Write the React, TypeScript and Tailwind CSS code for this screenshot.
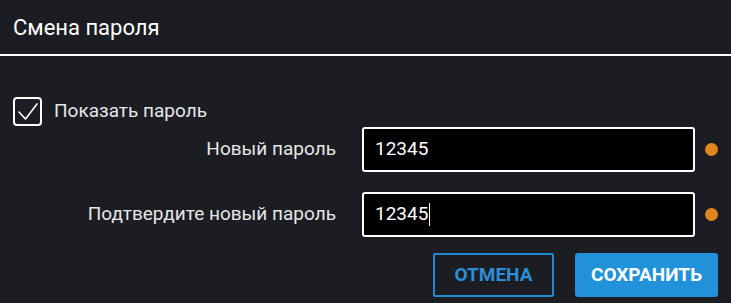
const Row = ({ label, value, caret }: { label: string; value: string; caret?: boolean }) => (
  <div className="flex items-center">
    <div className="w-[336px] text-right text-[19px] text-[#e6e6e6]">{label}</div>
    <div className="ml-[26px] flex h-[45px] w-[333px] items-center rounded-[3px] border-2 border-white bg-black pl-[11px] text-[19px] text-white">
      <span>{value}</span>
      <span className={caret ? 'ml-[1px] inline-block h-[23px] w-px bg-white' : 'hidden'} />
    </div>
    <div className="ml-[10px] h-[13px] w-[13px] rounded-full bg-[#e0861f]" />
  </div>
);

export default function App() {
  return (
    <div className="h-[303px] w-full overflow-hidden bg-[#1c1d22] font-['Roboto',sans-serif]">
      <div className="flex h-[54px] items-center px-[13px] text-[22px] text-white">
        Смена пароля
      </div>
      <div className="h-[2px] w-full bg-white" />
      <div className="flex flex-col pt-[41px]">
        <div className="flex items-center pl-[13px]">
          <div className="flex h-[29px] w-[29px] items-center justify-center rounded-[4px] border-2 border-white">
            <svg width="22" height="20" viewBox="0 0 22 20" fill="none">
              <path d="M2 10 L8.5 17 L20 2" stroke="white" strokeWidth="1.6" strokeLinecap="round" strokeLinejoin="round" />
            </svg>
          </div>
          <span className="ml-[12px] text-[19px] text-[#e6e6e6]">Показать пароль</span>
        </div>
        <div className="mt-[1px] flex flex-col gap-[20px]">
          <Row label="Новый пароль" value="12345" />
          <Row label="Подтвердите новый пароль" value="12345" caret />
        </div>
        <div className="mt-[16px] flex justify-end gap-[21px] pr-[13px]">
          <button className="flex h-[44px] w-[121px] items-center justify-center rounded-[2px] border-2 border-[#1f8bd3] text-[19px] font-bold text-[#2a8fd6]">
            ОТМЕНА
          </button>
          <button className="flex h-[44px] w-[143px] items-center justify-center rounded-[3px] bg-[#2191da] text-[19px] font-bold text-white">
            СОХРАНИТЬ
          </button>
        </div>
      </div>
    </div>
  );
}
